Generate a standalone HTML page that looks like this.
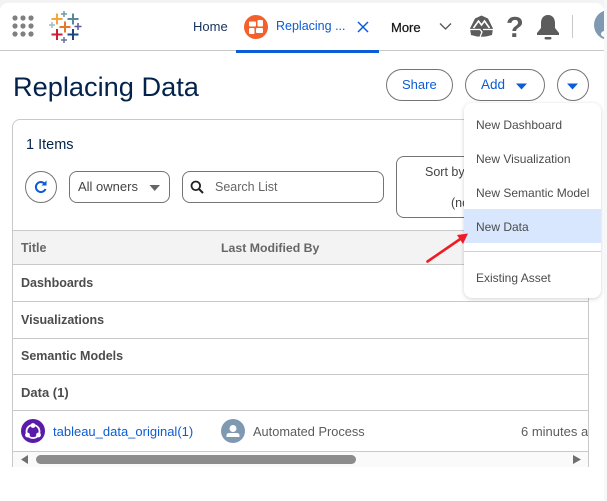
<!DOCTYPE html>
<html><head><meta charset="utf-8">
<style>
html,body{margin:0;padding:0;background:#fff}
body{width:607px;height:501px;overflow:hidden;position:relative;font-family:"Liberation Sans",sans-serif;color:#444}
.a{position:absolute;white-space:nowrap}
.t{font-size:12.5px;line-height:16px}
.b{box-sizing:border-box;border:1px solid #747474;background:#fff}
.l{left:13px;width:575px;height:1px;background:#c9c9c9}
.g{font-weight:bold;font-size:12.5px;line-height:16px;color:#4c4c4c;left:21px}
.m{left:476px;font-size:12px;line-height:16px;color:#4c4c4c}
</style></head><body>
<div class="a" style="left:0;top:0;width:607px;height:14px;background:#f3f3f3"></div>
<div class="a" style="left:0;top:3px;width:604px;height:30px;background:#fff;border-radius:8px 8px 0 0"></div>
<div class="a" style="left:0;top:50px;width:604px;height:1px;background:#c9c9c9"></div>
<div class="a" style="left:236px;top:50px;width:143px;height:3px;background:#0b5cd5"></div>

<svg class="a" style="left:0;top:0" width="90" height="50">
<g fill="#808080"><circle cx="15" cy="18" r="2.600"/><circle cx="23" cy="18" r="2.600"/><circle cx="31" cy="18" r="2.600"/><circle cx="15" cy="26" r="2.600"/><circle cx="23" cy="26" r="2.600"/><circle cx="31" cy="26" r="2.600"/><circle cx="15" cy="34" r="2.600"/><circle cx="23" cy="34" r="2.600"/><circle cx="31" cy="34" r="2.600"/></g>
<g fill="none">
<path d="M65 21.500v11M59.500 27h11" stroke="#e8762c" stroke-width="2"/>
<path d="M57 13.500v11M51.500 19h11" stroke="#f5a53a" stroke-width="2"/>
<path d="M73 13.500v11M67.500 19h11" stroke="#5b879b" stroke-width="2"/>
<path d="M57 29v11M51.500 34.500h11" stroke="#c72037" stroke-width="2"/>
<path d="M73 29v11M67.500 34.500h11" stroke="#1f447e" stroke-width="2"/>
<path d="M64 11v6M61 14h6" stroke="#7099a6" stroke-width="1.500"/>
<path d="M52 22v6M49 25h6" stroke="#9bbdca" stroke-width="1.500"/>
<path d="M78 23v7M74.500 26.500h7" stroke="#59599a" stroke-width="1.500"/>
<path d="M64 37v6M61 40h6" stroke="#6b6fa3" stroke-width="1.500"/>
</g></svg>

<div class="a" style="left:193px;top:19px;font-size:13px;line-height:16px;color:#16325c">Home</div>
<svg class="a" style="left:244px;top:15px" width="24" height="24"><circle cx="12" cy="12" r="12" fill="#f4602b"/><rect x="5" y="6.500" width="7" height="5" rx="1" fill="#fff"/><rect x="13.500" y="5" width="5.500" height="6.500" rx="1" fill="#fff"/><rect x="5" y="13" width="5.500" height="6" rx="1" fill="#fff"/><rect x="12" y="13" width="7" height="5" rx="1" fill="#fff"/></svg>
<div class="a" style="left:276px;top:18px;font-size:12.5px;line-height:16px;color:#0b5cd5">Replacing ...</div>
<svg class="a" style="left:357px;top:21px" width="12" height="12"><path d="M1 1L11 11M11 1L1 11" stroke="#0b5cd5" stroke-width="1.500"/></svg>
<div class="a" style="left:391px;top:20px;font-size:13px;line-height:16px;color:#181818;-webkit-text-stroke:.25px #181818">More</div>
<svg class="a" style="left:439px;top:22px" width="13" height="9"><path d="M1 1.500L6.500 7L12 1.500" fill="none" stroke="#555" stroke-width="1.300"/></svg>

<svg class="a" style="left:469px;top:15px" width="25" height="23"><path d="M12.500 0.500L19 3.500L24 13.500L23 20Q12.500 23.500 2 20L1 13.500L6 3.500Z" fill="#5c5c5c"/><path d="M4.500 13L9.500 6L12.500 10L15.500 6L20.500 13" fill="none" stroke="#fff" stroke-width="1.600"/><path d="M1 14.500H11L13 17L11 22M14 14.500H24" fill="none" stroke="#fff" stroke-width="1.300"/></svg>
<div class="a" style="left:506px;top:12px;font-size:29px;line-height:32px;font-weight:bold;color:#5c5c5c">?</div>
<svg class="a" style="left:536px;top:14px" width="24" height="26"><path d="M12 1C7 1 5 5 5 9V14L1 19V21H23V19L19 14V9C19 5 17 1 12 1Z" fill="#5c5c5c"/><rect x="8.500" y="23" width="7" height="2.500" rx="1.200" fill="#5c5c5c"/></svg>
<div class="a" style="left:572px;top:15px;width:1px;height:23px;background:#c9c9c9"></div>
<div class="a" style="left:594px;top:10px;width:30px;height:30px;border-radius:50%;background:#7f99b2"></div>
<div class="a" style="left:601px;top:31px;width:7px;height:6px;border-radius:50%;background:#fff"></div>
<div class="a" style="left:604px;top:0;width:3px;height:501px;background:#f8f8f8"></div>

<div class="a" style="left:13px;top:71px;font-size:27.2px;line-height:32px;color:#03234d">Replacing Data</div>

<div class="a" style="left:12px;top:119px;width:577px;height:348px;box-sizing:border-box;border:1px solid #c9c9c9;border-bottom:0;border-radius:8px 8px 0 0"></div>
<div class="a" style="left:26px;top:137px;font-size:14.5px;line-height:16px;color:#03234d">1 Items</div>

<div class="a b" style="left:25px;top:171px;width:32px;height:32px;border-radius:50%"></div>
<svg class="a" style="left:34px;top:180px" width="14" height="14"><path d="M11 4.200A5 5 0 1 0 11.500 9" fill="none" stroke="#0b5cd5" stroke-width="2"/><path d="M7.500 5.500H12.500V0.500Z" fill="#0b5cd5"/></svg>
<div class="a b" style="left:69px;top:171px;width:101px;height:32px;border-radius:8px"></div>
<div class="a t" style="left:78px;top:179px;font-size:13px;color:#444">All owners</div>
<svg class="a" style="left:149px;top:184px" width="12" height="8"><path d="M0.500 1H11L5.700 7Z" fill="#666"/></svg>
<div class="a b" style="left:182px;top:171px;width:202px;height:32px;border-radius:8px"></div>
<svg class="a" style="left:190px;top:180px" width="14" height="14"><circle cx="5.800" cy="5.800" r="4.300" fill="none" stroke="#222" stroke-width="1.800"/><path d="M9 9L13 13" stroke="#222" stroke-width="2"/></svg>
<div class="a t" style="left:215px;top:179px;color:#666">Search List</div>
<div class="a b" style="left:396px;top:156px;width:120px;height:62px;border-radius:8px"></div>
<div class="a t" style="left:425px;top:164px;color:#444">Sort by</div>
<div class="a t" style="left:451px;top:195px;color:#444">(no</div>

<div class="a" style="left:13px;top:230px;width:575px;height:34px;background:#f3f3f3"></div>
<div class="a l" style="top:230px"></div>
<div class="a l" style="top:264px"></div>
<div class="a l" style="top:301px"></div>
<div class="a l" style="top:338px"></div>
<div class="a l" style="top:374px"></div>
<div class="a l" style="top:410px"></div>
<div class="a l" style="top:451px"></div>
<div class="a" style="left:21px;top:240px;font-size:12.5px;line-height:16px;font-weight:bold;color:#666">Title</div>
<div class="a" style="left:221px;top:240px;font-size:12.3px;line-height:16px;font-weight:bold;color:#666">Last Modified By</div>
<div class="a g" style="top:275px">Dashboards</div>
<div class="a g" style="top:312px">Visualizations</div>
<div class="a g" style="top:348px">Semantic Models</div>
<div class="a g" style="top:385px;font-size:13px">Data (1)</div>

<svg class="a" style="left:21px;top:419px" width="24" height="24"><circle cx="12" cy="12" r="12" fill="#5a1ba9"/><circle cx="12" cy="12.500" r="6.500" fill="none" stroke="#fff" stroke-width="1.800"/><circle cx="12" cy="6.500" r="2.400" fill="#fff"/><circle cx="6.500" cy="16" r="2.400" fill="#fff"/><circle cx="17.500" cy="16" r="2.400" fill="#fff"/></svg>
<div class="a t" style="left:53px;top:424px;color:#0b5cd5;font-size:13px">tableau_data_original(1)</div>
<svg class="a" style="left:221px;top:419px" width="24" height="24"><circle cx="12" cy="12" r="12" fill="#7f99b2"/><circle cx="12" cy="9.500" r="3.500" fill="#fff"/><path d="M5.500 18V16.500Q5.500 14 8.500 14H15.500Q18.500 14 18.500 16.500V18Z" fill="#fff"/></svg>
<div class="a t" style="left:253px;top:424px;font-size:12.8px;color:#5c5c5c">Automated Process</div>
<div class="a" style="left:521px;top:424px;width:67px;overflow:hidden;font-size:13px;line-height:16px;color:#5c5c5c">6 minutes ago</div>

<div class="a" style="left:13px;top:452px;width:575px;height:15px;background:#fafafa"></div>
<svg class="a" style="left:20px;top:454px" width="10" height="11"><path d="M8 1V10L1 5.500Z" fill="#707070"/></svg>
<div class="a" style="left:36px;top:455px;width:320px;height:9px;border-radius:5px;background:#8c8c8c"></div>
<svg class="a" style="left:572px;top:454px" width="10" height="11"><path d="M1 1V10L9 5.500Z" fill="#707070"/></svg>

<div class="a b" style="left:386px;top:69px;width:67px;height:32px;border-radius:16px"></div>
<div class="a" style="left:402px;top:77px;font-size:13px;line-height:16px;color:#0b5cd5">Share</div>
<div class="a b" style="left:465px;top:69px;width:80px;height:32px;border-radius:16px"></div>
<div class="a" style="left:481px;top:77px;font-size:13.5px;line-height:16px;color:#0b5cd5">Add</div>
<svg class="a" style="left:516px;top:83px" width="11" height="7"><path d="M0 0.500H11L5.500 6.500Z" fill="#0b5cd5"/></svg>
<div class="a b" style="left:557px;top:69px;width:32px;height:32px;border-radius:50%"></div>
<svg class="a" style="left:567px;top:83px" width="11" height="7"><path d="M0 0.500H11L5.500 6.500Z" fill="#0b5cd5"/></svg>

<div class="a" style="left:464px;top:103px;width:137px;height:195px;background:#fff;border-radius:8px;box-shadow:0 1px 4px rgba(0,0,0,.18)"></div>
<div class="a" style="left:464px;top:209px;width:137px;height:34px;background:#d8e6fe"></div>
<div class="a" style="left:464px;top:251px;width:137px;height:1px;background:#d0d0d0"></div>
<div class="a m" style="top:117px">New Dashboard</div>
<div class="a m" style="top:151px">New Visualization</div>
<div class="a m" style="top:185px">New Semantic Model</div>
<div class="a m" style="top:219px">New Data</div>
<div class="a m" style="top:270px">Existing Asset</div>

<svg class="a" style="left:420px;top:225px" width="55" height="42"><path d="M7.500 36.500L41 13.500" stroke="#ee1c25" stroke-width="2.600" stroke-linecap="round"/><path d="M48 8.500L37 10L43 19Z" fill="#ee1c25"/></svg>
</body></html>
